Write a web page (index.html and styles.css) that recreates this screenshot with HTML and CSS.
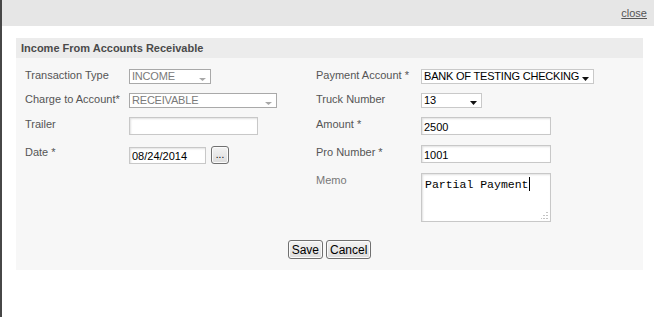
FILE: index.html
```html
<!DOCTYPE html>
<html lang="en">
<head>
    <meta charset="UTF-8"/>
    <meta content="width=device-width, initial-scale=1.0" name="viewport"/>
    <title>Income From Accounts Receivable</title>
    <link rel="stylesheet" href="styles.css">
</head>
<body>
    <div class="window">
        <div class="topbar">
            <a href="#" class="close">close</a>
        </div>

        <div class="content">
            <div class="panel">
                <div class="panel-title">Income From Accounts Receivable</div>

                <div class="form">
                    <div class="label">Transaction Type</div>
                    <div class="cell">
                        <div class="select select-off w-income">
                            <span>INCOME</span>
                            <svg class="arrow" width="7" height="3" viewBox="0 0 7 3"><path d="M0 0h7L3.5 3z" fill="#a8a8a8"/></svg>
                        </div>
                    </div>
                    <div class="label">Payment Account *</div>
                    <div class="cell">
                        <div class="select w-bank">
                            <span>BANK OF TESTING CHECKING</span>
                            <svg class="arrow" width="7" height="4" viewBox="0 0 7 4"><path d="M0 0h7L3.5 4z" fill="#111"/></svg>
                        </div>
                    </div>

                    <div class="label">Charge to Account*</div>
                    <div class="cell">
                        <div class="select select-off w-account">
                            <span>RECEIVABLE</span>
                            <svg class="arrow" width="7" height="3" viewBox="0 0 7 3"><path d="M0 0h7L3.5 3z" fill="#a8a8a8"/></svg>
                        </div>
                    </div>
                    <div class="label">Truck Number</div>
                    <div class="cell">
                        <div class="select w-truck">
                            <span>13</span>
                            <svg class="arrow" width="7" height="4" viewBox="0 0 7 4"><path d="M0 0h7L3.5 4z" fill="#111"/></svg>
                        </div>
                    </div>

                    <div class="label">Trailer</div>
                    <div class="cell">
                        <input type="text" class="text w-trailer" value="">
                    </div>
                    <div class="label">Amount *</div>
                    <div class="cell">
                        <input type="text" class="text w-amount" value="2500">
                    </div>

                    <div class="label">Date *</div>
                    <div class="cell date-cell">
                        <input type="text" class="text w-date" value="08/24/2014">
                        <button class="btn btn-pick">...</button>
                    </div>
                    <div class="label">Pro Number *</div>
                    <div class="cell">
                        <input type="text" class="text w-amount" value="1001">
                    </div>

                    <div class="label"></div>
                    <div class="cell"></div>
                    <div class="label label-memo">Memo</div>
                    <div class="cell">
                        <div class="memo">Partial Payment<span class="caret"></span>
                            <svg class="grip" width="7" height="7" viewBox="0 0 7 7">
                                <rect x="5" y="0" width="2" height="1" fill="#c4c4c4"/>
                                <rect x="5" y="3" width="2" height="1" fill="#c4c4c4"/>
                                <rect x="2" y="3" width="2" height="1" fill="#c4c4c4"/>
                                <rect x="5" y="6" width="2" height="1" fill="#c4c4c4"/>
                                <rect x="2" y="6" width="2" height="1" fill="#c4c4c4"/>
                                <rect x="0" y="6" width="1" height="1" fill="#c4c4c4"/>
                            </svg>
                        </div>
                    </div>

                    <div class="actions">
                        <button class="btn">Save</button>
                        <button class="btn">Cancel</button>
                    </div>
                </div>
            </div>
        </div>
    </div>
</body>
</html>
```

FILE: styles.css
```css
body {
    margin: 0;
    background: #ffffff;
    font-family: "Liberation Sans", Arial, sans-serif;
    font-size: 11px;
    color: #555;
}
.window {
    min-height: 317px;
    border-left: 2px solid #474747;
    box-sizing: border-box;
}
.topbar {
    height: 26px;
    background: #e6e6e6;
    text-align: right;
    padding-right: 7px;
}
.close {
    display: inline-block;
    line-height: 27px;
    color: #555;
    font-size: 11px;
}
.content {
    padding: 12px 11px 0 14px;
}
.panel {
    background: #f7f7f7;
    padding-bottom: 11px;
}
.panel-title {
    height: 20px;
    line-height: 20px;
    padding-left: 5px;
    background: #ececec;
    font-weight: bold;
    font-size: 11px;
    color: #4a4a4a;
}
.form {
    display: grid;
    grid-template-columns: 104px 187px 105px 1fr;
    grid-template-rows: 24px 25px 28px 28px auto;
    padding: 10px 0 0 9px;
}
.label {
    line-height: 14px;
    font-size: 11px;
    color: #555;
}
.label-memo {
    color: #777;
}
.cell {
    display: flex;
    align-items: flex-start;
}
.select {
    position: relative;
    height: 15px;
    margin-top: 1px;
    box-sizing: border-box;
    background: #fff;
    border: 1px solid #c9c9c9;
    padding-left: 2px;
    line-height: 13px;
    font-size: 11px;
    letter-spacing: -0.2px;
    color: #000;
}
.select-off {
    border-color: #a9a9a9;
    color: #7a7a7a;
}
.arrow {
    position: absolute;
    right: 4px;
    bottom: 2px;
}
.w-income { width: 82px; }
.w-account { width: 148px; }
.w-bank { width: 173px; }
.w-truck { width: 61px; }
.text {
    height: 18px;
    box-sizing: border-box;
    margin: 0;
    padding: 1px 2px 0;
    border: 1px solid #c8c8c8;
    box-shadow: inset 1px 1px 2px rgba(0, 0, 0, 0.12);
    background: #fff;
    font-family: "Liberation Sans", Arial, sans-serif;
    font-size: 11px;
    color: #000;
    outline: none;
}
.w-trailer { width: 129px; }
.w-amount { width: 130px; }
.w-date {
    width: 77px;
    height: 17px;
    margin-top: 2px;
}
.date-cell {
    gap: 5px;
}
.btn {
    margin: 0;
    height: 19px;
    padding: 0 3px;
    border: 1px solid #707070;
    border-radius: 3px;
    background: linear-gradient(#f3f3f3, #dcdcdc);
    box-shadow: inset 0 0 0 1px #fbfbfb;
    font-family: "Liberation Sans", Arial, sans-serif;
    font-size: 12px;
    color: #000;
    line-height: 16px;
}
.btn-pick {
    width: 18px;
    height: 18px;
    margin-top: 1px;
    padding: 0;
    font-size: 10px;
    line-height: 14px;
}
.memo {
    position: relative;
    width: 130px;
    height: 49px;
    box-sizing: border-box;
    border: 1px solid #c8c8c8;
    box-shadow: inset 1px 1px 2px rgba(0, 0, 0, 0.12);
    background: #fff;
    padding: 3px 3px 0;
    font-family: "Liberation Mono", "Courier New", monospace;
    font-size: 11.5px;
    line-height: 13px;
    color: #000;
}
.caret {
    display: inline-block;
    width: 1px;
    height: 14px;
    background: #000;
    vertical-align: -3px;
}
.grip {
    position: absolute;
    right: 2px;
    bottom: 2px;
}
.actions {
    grid-column: 1 / -1;
    display: flex;
    justify-content: center;
    gap: 3px;
    margin-top: 18px;
    margin-left: -9px;
}
```
